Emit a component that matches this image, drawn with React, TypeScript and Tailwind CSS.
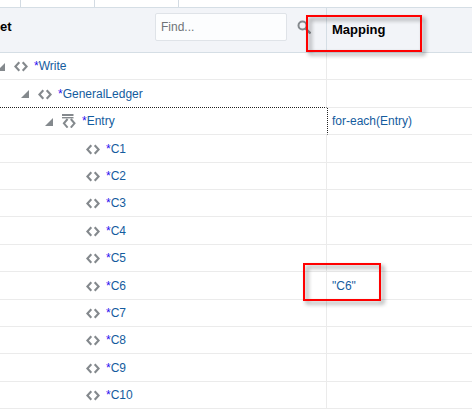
type Row = { name: string; indent: string; kind: "group" | "repeat" | "leaf"; mapping?: string; tall?: boolean };

const rows: Row[] = [
  { name: "Write", indent: "-ml-1", kind: "group" },
  { name: "GeneralLedger", indent: "ml-5", kind: "group", tall: true },
  { name: "Entry", indent: "ml-11", kind: "repeat", mapping: "for-each(Entry)" },
  { name: "C1", indent: "ml-[68px]", kind: "leaf", tall: true },
  { name: "C2", indent: "ml-[68px]", kind: "leaf" },
  { name: "C3", indent: "ml-[68px]", kind: "leaf" },
  { name: "C4", indent: "ml-[68px]", kind: "leaf", tall: true },
  { name: "C5", indent: "ml-[68px]", kind: "leaf" },
  { name: "C6", indent: "ml-[68px]", kind: "leaf", mapping: '"C6"', tall: true },
  { name: "C7", indent: "ml-[68px]", kind: "leaf" },
  { name: "C8", indent: "ml-[68px]", kind: "leaf" },
  { name: "C9", indent: "ml-[68px]", kind: "leaf", tall: true },
  { name: "C10", indent: "ml-[68px]", kind: "leaf" },
];

function ElementIcon() {
  return (
    <svg aria-hidden="true" width="14" height="14" viewBox="0 0 14 14" fill="none" stroke="#84898d" strokeWidth="2.1" className="shrink-0">
      <path d="M5.3 3.2 1.4 7.5 5.3 11.8M8.7 3.2 12.6 7.5 8.7 11.8" />
    </svg>
  );
}

function RepeatIcon() {
  return (
    <svg aria-hidden="true" width="14" height="14" viewBox="0 0 14 14" fill="none" stroke="#84898d" className="shrink-0">
      <path d="M0 1h11.5" strokeWidth="2" />
      <path d="M0 3.7h11.5" strokeWidth="1.4" />
      <path d="M5.6 5 1.9 9.3 5.6 13.6M8.8 5 12.5 9.3 8.8 13.6" strokeWidth="2" />
    </svg>
  );
}

function Highlight({ place }: { place: string }) {
  return (
    <span
      aria-hidden="true"
      className={`pointer-events-none absolute z-10 border-2 border-[#ff0000] drop-shadow-[3px_3px_2px_rgba(0,0,0,0.45)] ${place}`}
    />
  );
}

export default function App() {
  return (
    <main className="overflow-hidden bg-white font-['Liberation_Sans',Arial,sans-serif] text-xs leading-4 text-[#145c9e]">
      <div className="flex h-[7px]">
        <div className="w-[21px] border-r border-[#d3dbe3]" />
        <div className="w-[74px] border-r border-[#d3dbe3]" />
        <div className="w-[84px] border-r border-[#d3dbe3]" />
      </div>
      <table className="w-full table-fixed border-separate border-spacing-0">
        <thead>
          <tr className="h-[46px] bg-[#f2f4f8] text-left text-[13px] leading-4 text-black">
            <th scope="col" className="w-[327px] border-y border-r border-[#d5dee5] p-0">
              <div className="flex items-center pb-1.5">
                <span className="w-[155px]">et</span>
                <input
                  type="text"
                  aria-label="Find"
                  placeholder="Find..."
                  className="h-7 w-[132px] rounded-xs border border-[#dfe3e8] bg-[#fcfdfe] px-[5px] text-xs font-normal outline-none placeholder:text-[#6f7377]"
                />
                <button type="button" aria-label="Search" className="ml-2.5 text-[#84898d]">
                  <svg width="14" height="14" viewBox="0 0 14 14" fill="none" stroke="currentColor" strokeWidth="2">
                    <circle cx="5.5" cy="5.5" r="4" />
                    <path d="m8.5 8.5 5 5" strokeWidth="2.4" />
                  </svg>
                </button>
              </div>
            </th>
            <th scope="col" className="relative border-y border-[#d5dee5] py-0 pr-0 pl-[5px]">
              Mapping
              <Highlight place="-left-[21px] top-[7px] h-[37px] w-[116px]" />
            </th>
          </tr>
        </thead>
        <tbody>
          {rows.map((row) => (
            <tr key={row.name} className={row.tall ? "h-7" : "h-[27px]"}>
              <td
                className={`border-b p-0 ${row.kind === "repeat" ? "" : "border-r border-r-[#ebebeb]"} ${
                  row.name === "GeneralLedger" ? "border-b-[#222] [border-bottom-style:dotted]" : "border-b-[#ebebeb]"
                }`}
              >
                <div className={`flex items-center ${row.indent}`}>
                  {row.kind === "leaf" ? (
                    <span className="w-[18px]" />
                  ) : (
                    <button type="button" aria-label={`Collapse ${row.name}`} className="w-[18px]">
                      <svg width="9" height="8" viewBox="0 0 9 8" className="mt-px fill-[#84898d]">
                        <path d="M9 0v8H1z" />
                      </svg>
                    </button>
                  )}
                  {row.kind === "repeat" ? <RepeatIcon /> : <ElementIcon />}
                  <span className="ml-1.5">
                    <span className="text-[#2a10f0]">*</span>
                    {row.name}
                  </span>
                </div>
              </td>
              <td
                className={`relative border-b border-b-[#ebebeb] py-0 pr-0 ${
                  row.kind === "repeat" ? "border-l border-l-[#222] pl-1 [border-left-style:dotted]" : "pl-[5px]"
                }`}
              >
                {row.mapping}
                {row.name === "C6" && <Highlight place="-left-6 -top-[9px] h-[38px] w-[78px]" />}
              </td>
            </tr>
          ))}
        </tbody>
      </table>
    </main>
  );
}
